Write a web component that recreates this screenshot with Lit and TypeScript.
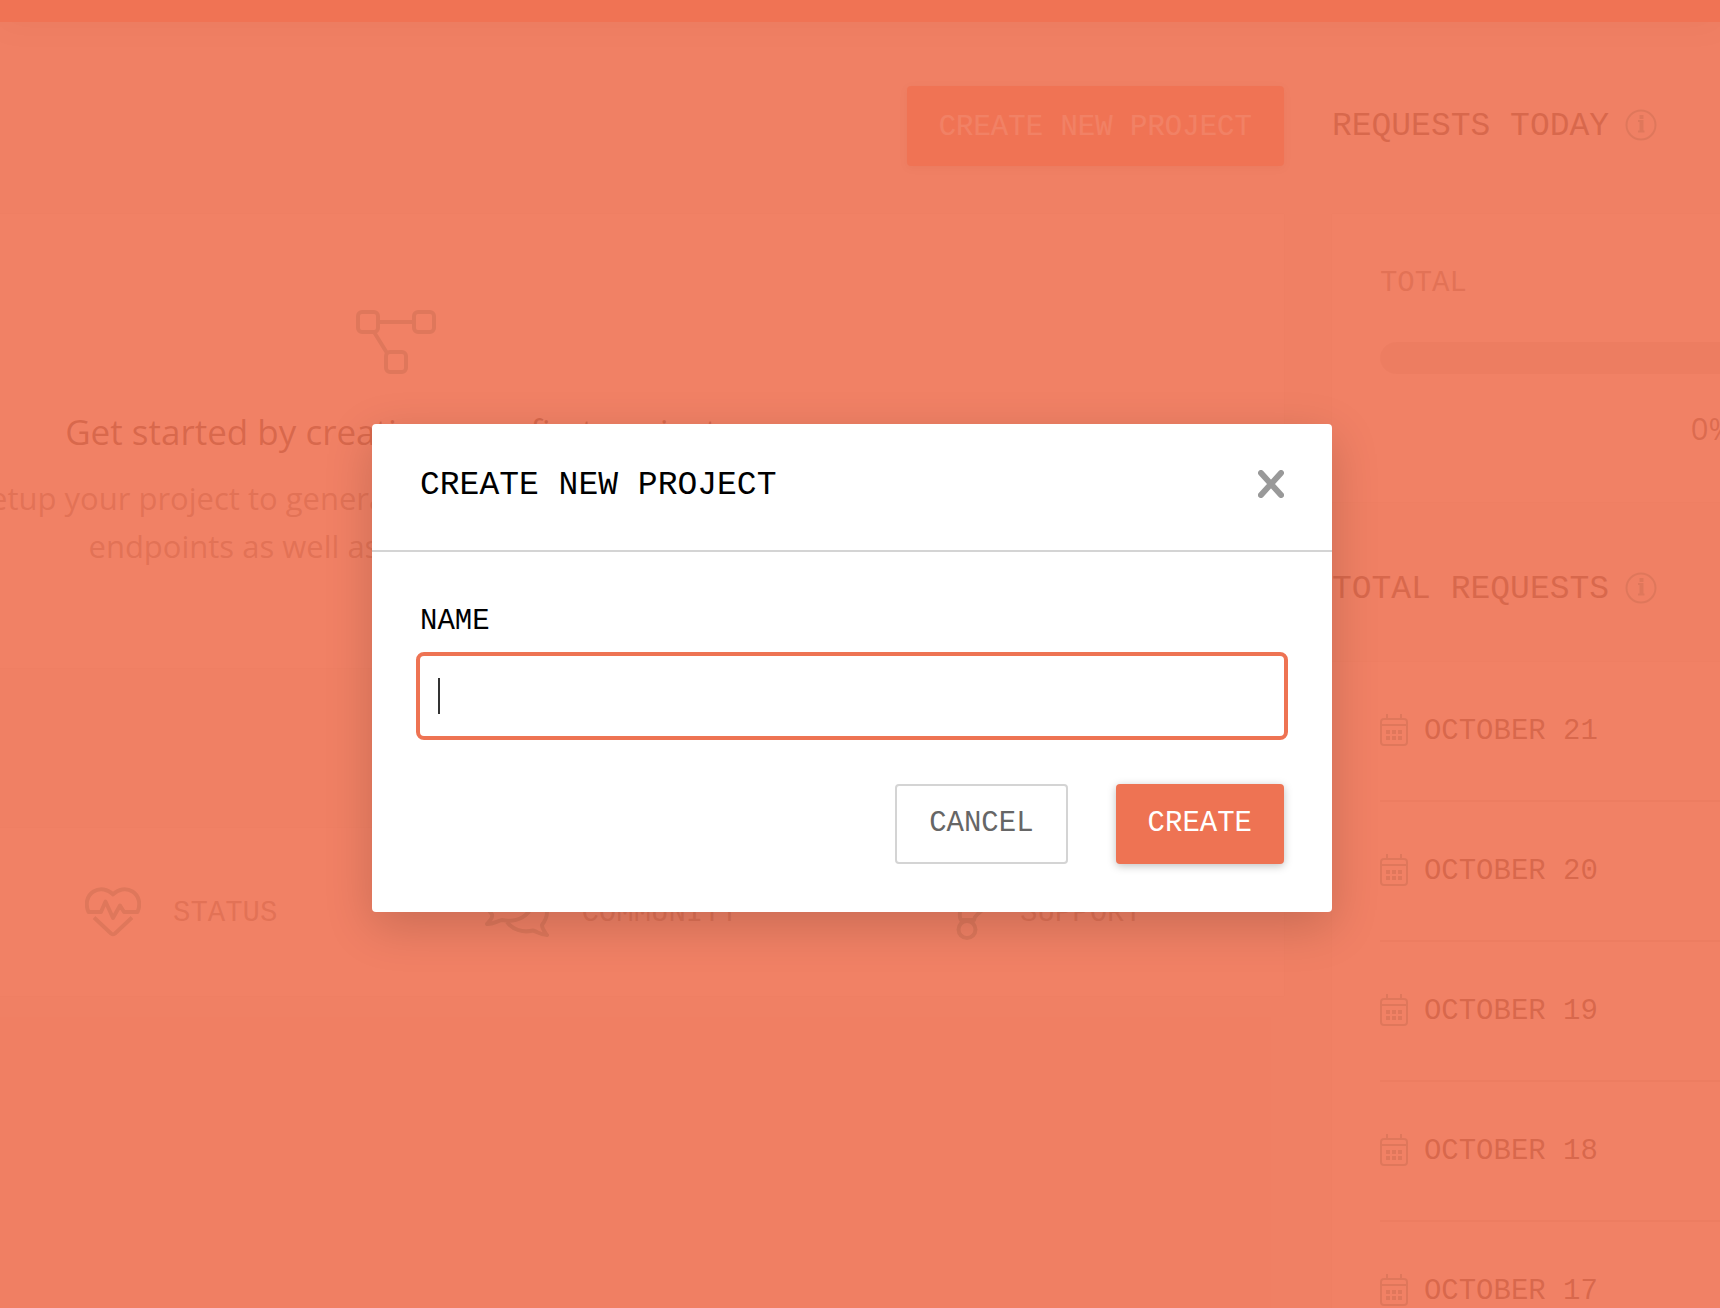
import { LitElement, html, css, svg } from "lit";
import { customElement, state } from "lit/decorators.js";

const networkIcon = svg`
  <svg class="network" viewBox="0 0 80 64" fill="none" stroke="currentColor" stroke-width="4" aria-hidden="true">
    <rect x="2" y="2" width="20" height="20" rx="4" />
    <rect x="58" y="2" width="20" height="20" rx="4" />
    <rect x="30" y="42" width="20" height="20" rx="4" />
    <path d="M22 12H58M18 22L31 43" />
  </svg>`;

const infoIcon = svg`
  <svg class="info" viewBox="0 0 32 32" fill="none" stroke="currentColor" stroke-width="2" aria-hidden="true">
    <circle cx="16" cy="16" r="14.500" />
    <path d="M13 12h4.500M13 22.500h6.500" />
    <path d="M16.500 11v12M14.500 8h4" stroke-width="4" />
  </svg>`;

const calendarIcon = svg`
  <svg class="calendar" viewBox="0 0 28 32" fill="none" stroke="currentColor" stroke-width="2" aria-hidden="true">
    <rect x="1" y="5" width="26" height="26" rx="3" />
    <path d="M7 0v5M21 0v5M1 11h26" />
    <path d="M6 18h4M12 18h4M18 18h4M6 24h4M12 24h4M18 24h4" stroke-width="4" />
  </svg>`;

const statusIcon = svg`
  <svg class="status" viewBox="0 0 56 50" fill="none" stroke="currentColor" stroke-width="4" stroke-linejoin="round" aria-hidden="true">
    <path d="M3.500 25H16L20.500 14.500L28 31L35 18.500L39 25H52.500C56 17 54 8.500 47.500 4.500C41 0.500 33 2 28 7.500C23 2 15 0.500 8.500 4.500C2 8.500 0 17 3.500 25Z" />
    <path d="M9 30.500L26 46.500Q28 48 30 46.500L47 30.500" />
  </svg>`;

const communityIcon = svg`
  <svg class="community" viewBox="0 0 64 50" fill="none" stroke="currentColor" stroke-width="4" stroke-linejoin="round" aria-hidden="true">
    <path d="M24 2C11 2 2 8 2 16.500C2 21 4 24 7 27.500C8 30 5 34 2 37C8 37.500 12 34 17 33C33 36 46 28 46 17C46 8 37 2 24 2Z" />
    <path d="M50 11C58 13.500 62 18 62 25C62 31 60 34 57 38C57 42 60 45 62 48C56 48 53 45 48 43.500C38 46 28 43 22 35" />
  </svg>`;

const supportIcon = svg`
  <svg class="support" viewBox="0 0 42 56" fill="none" stroke="currentColor" stroke-width="4" stroke-linejoin="round" aria-hidden="true">
    <path d="M2 14C6 6 12 2 21 2C32 2 40 9 40 16C40 23 37 26 34 28C31 31 29 31 28 36H15C13 34 14 29 14 26C16 21 27 20 26 15C24 11 16 13 13 18Z" />
    <circle cx="21" cy="45.500" r="8.500" />
  </svg>`;

const closeIcon = svg`
  <svg class="cross" viewBox="0 0 26 28" fill="none" stroke="currentColor" stroke-width="6" stroke-linecap="round" aria-hidden="true">
    <path d="M3 3L23 25M23 3L3 25" />
  </svg>`;

@customElement("app-root")
export class AppRoot extends LitElement {
  @state() private days = ["October 21", "October 20", "October 19", "October 18", "October 17"];

  static styles = css`
    :host {
      --brand: #ee7353;
      --line: #d4d4d4;
      display: block;
      position: relative;
      height: 100vh;
      overflow: hidden;
      background: #f0f0f0;
      color: #000;
      font-family: "Liberation Mono", monospace;
      font-size: 29px;
      line-height: 40px;
      text-transform: uppercase;
    }
    * { box-sizing: border-box; }
    svg { display: block; flex: none; color: #4a9a9c; }
    h1, h2, h3, p, ul { margin: 0; padding: 0; font-weight: 400; }
    button, input { font: inherit; text-transform: inherit; }
    .nav { height: 22px; background: var(--brand); box-shadow: 0 0 32px rgba(0, 0, 0, 0.3); }
    .columns {
      display: grid;
      grid-template-columns: 7fr 3fr;
      gap: 48px;
      align-items: start;
      margin: 0 -373px 0 -492px;
      padding-top: 64px;
    }
    .head { display: flex; align-items: center; height: 78px; margin-bottom: 50px; gap: 16px; }
    .head.end { justify-content: flex-end; height: 80px; margin-bottom: 48px; }
    .head.later { height: 48px; margin: 62px 0 50px; }
    h2, h1 { padding-top: 4px; font-size: 33px; line-height: 48px; }
    .card { background: #fff; box-shadow: 0 0 2px rgba(0, 0, 0, 0.1); }
    .intro {
      display: flex;
      flex-direction: column;
      align-items: center;
      height: 454px;
      padding-top: 96px;
      font-family: "Open Sans", sans-serif;
      text-align: center;
      text-transform: none;
    }
    .intro h3 { margin-top: 32px; font-size: 35px; line-height: 52px; }
    .intro p { margin-top: 16px; color: #666; font-size: 31px; line-height: 48px; }
    .links {
      display: flex;
      justify-content: flex-end;
      align-items: center;
      gap: 208px;
      height: 168px;
      margin-top: 160px;
      padding-right: 142px;
    }
    .links a { display: flex; align-items: center; gap: 32px; color: #666; text-decoration: none; }
    .links span { padding-top: 4px; }
    .network { width: 80px; height: 64px; }
    .info { width: 32px; height: 32px; }
    .calendar { width: 28px; height: 32px; }
    .status { width: 56px; height: 50px; }
    .community { width: 64px; height: 50px; }
    .support { width: 42px; height: 56px; }
    .usage { height: 288px; padding: 50px 48px 48px; color: #666; }
    .track { height: 32px; margin: 38px 0 34px; border-radius: 16px; background: #d8d8d8; }
    .percent { color: #222; font-family: "Open Sans", sans-serif; font-size: 31px; text-align: center; }
    .days { padding: 0 48px; list-style: none; }
    .days li { display: flex; align-items: center; gap: 16px; height: 140px; padding-bottom: 2px; border-bottom: 2px solid var(--line); }
    .days span { padding-top: 4px; }
    .btn {
      height: 80px;
      padding: 0 32px;
      border: 0;
      border-radius: 4px;
      background: var(--brand);
      color: #fff;
      box-shadow: 0 2px 8px rgba(0, 0, 0, 0.25);
      white-space: nowrap;
    }
    .head .btn { padding-top: 4px; }
    .btn.plain { border: 2px solid var(--line); background: #fff; color: #666; box-shadow: none; }
    .overlay {
      position: absolute;
      inset: 0;
      display: flex;
      align-items: center;
      justify-content: center;
      padding: 28px 16px 0 0;
      background: rgba(240, 115, 84, 0.9);
    }
    .modal {
      width: 960px;
      max-width: 100%;
      border-radius: 4px;
      background: #fff;
      box-shadow: 0 14px 48px rgba(0, 0, 0, 0.17);
    }
    .modal header {
      display: flex;
      align-items: center;
      justify-content: space-between;
      padding: 34px 48px 40px;
      border-bottom: 2px solid var(--line);
    }
    .close { padding: 0; border: 0; background: none; }
    .cross { width: 26px; height: 28px; color: #999; }
    form { padding: 50px 48px 48px; }
    label { display: block; margin-bottom: 14px; }
    .field { position: relative; }
    input {
      display: block;
      width: 100%;
      height: 80px;
      padding: 0 18px;
      border: 0;
      border-radius: 4px;
      outline: 4px solid var(--brand);
      background: #fff;
      caret-color: transparent;
    }
    .caret { position: absolute; left: 18px; top: 22px; width: 2px; height: 36px; background: #333; }
    .actions { display: flex; justify-content: flex-end; gap: 48px; margin-top: 48px; }
  `;

  render() {
    return html`
      <div class="nav"></div>
      <main class="columns">
        <section>
          <div class="head end"><button class="btn">Create new project</button></div>
          <div class="card intro">
            ${networkIcon}
            <h3>Get started by creating your first project.</h3>
            <p>Setup your project to generate API keys, secrets, and other<br />endpoints as well as your security settings.</p>
          </div>
          <nav class="card links">
            <a href="#status">${statusIcon}<span>Status</span></a>
            <a href="#community">${communityIcon}<span>Community</span></a>
            <a href="#support">${supportIcon}<span>Support</span></a>
          </nav>
        </section>
        <aside>
          <div class="head"><h2>Requests today</h2>${infoIcon}</div>
          <div class="card usage">
            <div>Total</div>
            <div class="track"></div>
            <div class="percent">0%</div>
          </div>
          <div class="head later"><h2>Total requests</h2>${infoIcon}</div>
          <ul class="card days">
            ${this.days.map((day) => html`<li>${calendarIcon}<span>${day}</span></li>`)}
          </ul>
        </aside>
      </main>
      <div class="overlay">
        <div class="modal" role="dialog" aria-modal="true" aria-labelledby="title">
          <header>
            <h1 id="title">Create new project</h1>
            <button class="close" aria-label="Close">${closeIcon}</button>
          </header>
          <form @submit=${(e: Event) => e.preventDefault()}>
            <label for="name">Name</label>
            <div class="field">
              <input id="name" type="text" autocomplete="off" />
              <span class="caret"></span>
            </div>
            <div class="actions">
              <button class="btn plain" type="button">Cancel</button>
              <button class="btn" type="submit">Create</button>
            </div>
          </form>
        </div>
      </div>
    `;
  }
}
